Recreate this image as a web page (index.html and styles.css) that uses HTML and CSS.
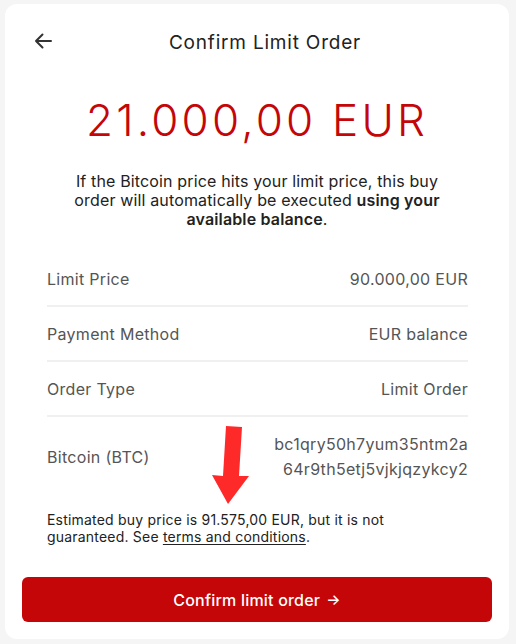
FILE: index.html
```html
<!DOCTYPE html>
<html lang="en">
<head>
<meta charset="utf-8">
<title>Confirm Limit Order</title>
<link rel="stylesheet" href="styles.css">
</head>
<body>
<div class="card">
  <header class="header">
    <button class="back" aria-label="Back">
      <svg width="18" height="16" viewBox="0 0 18 16"><path d="M17 8H2M8.5 1.5L2 8l6.5 6.5" fill="none" stroke="#333" stroke-width="2" stroke-linecap="round" stroke-linejoin="round"/></svg>
    </button>
    <h1 class="title">Confirm Limit Order</h1>
  </header>
  <div class="amount">21.000,00 EUR</div>
  <p class="intro">If the Bitcoin price hits your limit price, this buy order will automatically be executed <strong>using your available balance</strong>.</p>
  <div class="details">
    <div class="row"><span class="label">Limit Price</span><span class="value">90.000,00 EUR</span></div>
    <div class="row"><span class="label">Payment Method</span><span class="value">EUR balance</span></div>
    <div class="row"><span class="label">Order Type</span><span class="value">Limit Order</span></div>
    <div class="row row-last"><span class="label">Bitcoin (BTC)</span><span class="value address">bc1qry50h7yum35ntm2a<br>64r9th5etj5vjkjqzykcy2</span></div>
    <svg class="annot" width="40" height="82" viewBox="0 0 40 82"><path d="M14 0L30 1L27 50L37 50L16 78L0 49L11 50Z" fill="#fe2a2a"/></svg>
  </div>
  <p class="note">Estimated buy price is 91.575,00 EUR, but it is not guaranteed. See <a href="#">terms and conditions</a>.</p>
  <button class="confirm">Confirm limit order <span class="arrow">→</span></button>
</div>
</body>
</html>
```
FILE: styles.css
```css
* { box-sizing: border-box; }
html, body { margin: 0; padding: 0; }
body {
  background: #f5f5f5;
  font-family: Inter, "Noto Sans", sans-serif;
  color: #222;
  width: 516px;
  height: 644px;
  padding: 4px 7px 5px 5px;
}
.card {
  background: #fff;
  border-radius: 12px;
  height: 635px;
  padding: 0 17px 17px;
  display: flex;
  flex-direction: column;
}
.header {
  position: relative;
  height: 76px;
  padding-left: 16px;
  display: flex;
  align-items: center;
  justify-content: center;
}
.back {
  position: absolute;
  left: 12px;
  top: 29px;
  border: 0;
  background: none;
  padding: 0;
  width: 18px;
  height: 16px;
  display: flex;
}
.title {
  margin: 0;
  font-size: 19px;
  font-weight: 400;
  color: #222;
  letter-spacing: 0.8px;
}
.amount {
  margin-top: 12px;
  text-align: center;
  color: #c40608;
  font-size: 44px;
  line-height: 56px;
  font-weight: 300;
  letter-spacing: 3.2px;
}
.intro {
  margin: 24px 40px 0;
  text-align: center;
  font-size: 16px;
  line-height: 19px;
  color: #222;
  letter-spacing: 0.15px;
}
.intro strong { font-weight: 600; }
.details {
  position: relative;
  margin: 23px 24px 0 25px;
}
.row {
  display: flex;
  justify-content: space-between;
  align-items: center;
  height: 55px;
  border-bottom: 2px solid #f0f0f0;
  font-size: 16px;
  color: #555;
  letter-spacing: 0.3px;
}
.row-last {
  border-bottom: 0;
  height: 80px;
}
.address {
  text-align: right;
  line-height: 25px;
}
.annot {
  position: absolute;
  left: 165px;
  top: 174px;
}
.note {
  margin: 14px 100px 0 25px;
  font-size: 14px;
  line-height: 17px;
  color: #222;
  letter-spacing: 0.2px;
}
.note a { color: #222; text-decoration: underline; text-underline-offset: 2px; }
.confirm {
  margin-top: auto;
  height: 45px;
  border: 0;
  border-radius: 6px;
  background: #c40608;
  color: #fff;
  font-family: inherit;
  font-size: 16px;
  font-weight: 500;
  letter-spacing: 0.2px;
  display: flex;
  align-items: center;
  justify-content: center;
  gap: 6px;
}
.arrow { font-size: 15px; }
```
